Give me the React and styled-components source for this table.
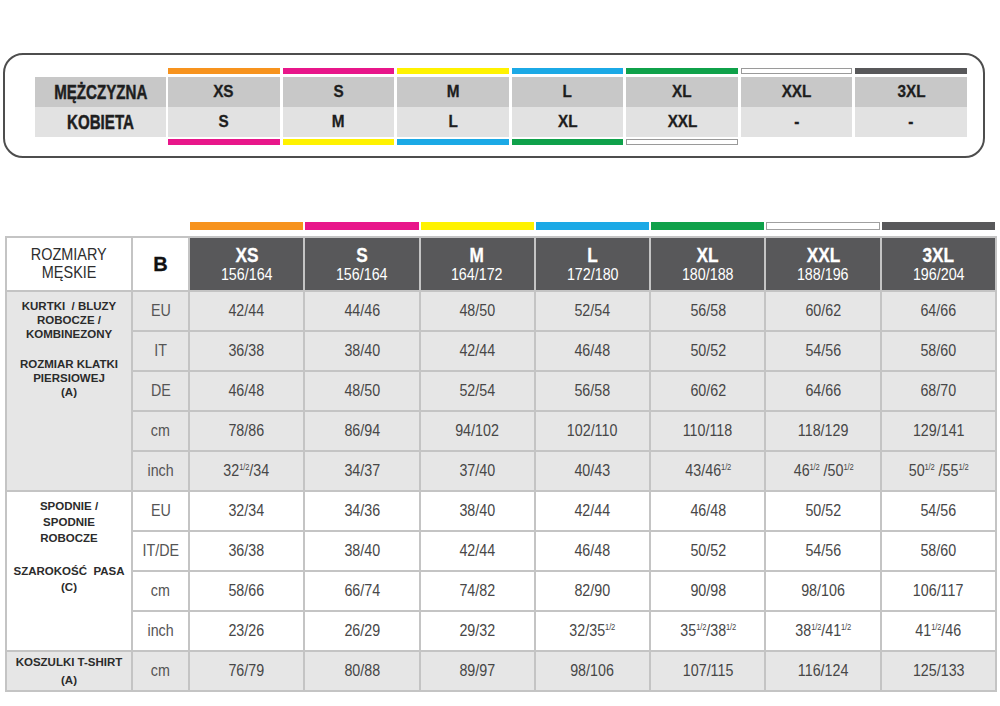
import React from "react";
import styled, { createGlobalStyle } from "styled-components";

const Global = createGlobalStyle`
  html, body { margin: 0; padding: 0; background: #fff; }
  body { font-family: "Liberation Sans", Arial, sans-serif; }
`;

const BAR = {
  orange: "#f7931e",
  magenta: "#e8168a",
  yellow: "#fff200",
  cyan: "#1ba9e6",
  green: "#0fa14a",
  white: "#ffffff",
  dark: "#58585a",
};

const Page = styled.div`
  width: 1000px;
  height: 706px;
  box-sizing: border-box;
  padding: 53px 0 0 3px;
  overflow: hidden;
`;

/* horizontally condensed text (stand-in for a condensed typeface) */
const Squeeze = styled.span`
  display: inline-block;
  white-space: nowrap;
  transform: scaleX(${(p) => p.$x || 0.82});
`;

/* ---------- top rounded box ---------- */
const TopBox = styled.div`
  width: 982px;
  height: 105px;
  box-sizing: border-box;
  border: 2px solid #4d4d4d;
  border-radius: 20px;
  padding: 13px 0 0 30px;
`;

const TopGrid = styled.div`
  width: 932px;
  display: grid;
  grid-template-columns: 130px repeat(7, 1fr);
  column-gap: 3px;
`;

const TopBar = styled.div`
  height: 6px;
  box-sizing: border-box;
  background: ${(p) => (p.$color ? BAR[p.$color] : "transparent")};
  border: ${(p) => (p.$color === "white" ? "1px solid #9a9a9a" : "none")};
  margin: ${(p) => (p.$bottom ? "2px 0 0" : "0 0 3px")};
`;

const TopLabel = styled.div`
  height: 30px;
  display: flex;
  align-items: center;
  justify-content: center;
  background: ${(p) => (p.$dark ? "#c8c8c8" : "#e2e2e2")};
  margin-right: -1px;
  font-weight: 700;
  font-size: 21px;
  color: #1e1e1e;
  -webkit-text-stroke: 0.5px #1e1e1e;
`;

const TopCell = styled.div`
  height: 30px;
  display: flex;
  align-items: center;
  justify-content: center;
  background: ${(p) => (p.$dark ? "#c8c8c8" : "#e2e2e2")};
  font-weight: 700;
  font-size: 17px;
  color: #1e1e1e;
  -webkit-text-stroke: 0.3px #1e1e1e;
`;

/* ---------- lower table ---------- */
const COLS = "124px 55px repeat(7, 1fr)";

const Lower = styled.div`
  margin: 64px 0 0 2px;
  width: 992px;
`;

const BarRow = styled.div`
  display: grid;
  grid-template-columns: ${COLS};
  column-gap: 2px;
  padding: 0 2px;
  margin-bottom: 6px;
`;

const Bar = styled.div`
  height: 8px;
  box-sizing: border-box;
  background: ${(p) => (p.$color ? BAR[p.$color] : "transparent")};
  border: ${(p) => (p.$color === "white" ? "1px solid #a0a0a0" : "none")};
`;

const Table = styled.div`
  display: grid;
  grid-template-columns: ${COLS};
  grid-template-rows: 52px;
  grid-auto-rows: 38px;
  gap: 2px;
  background: #c4c4c4;
  border: 2px solid #c4c4c4;
`;

const HeadTitle = styled.div`
  background: #fff;
  display: flex;
  flex-direction: column;
  align-items: center;
  justify-content: center;
  font-size: 17px;
  line-height: 18px;
  color: #2d2d2d;
`;

const HeadB = styled.div`
  background: #fff;
  display: flex;
  align-items: center;
  justify-content: center;
  font-weight: 700;
  font-size: 20px;
  color: #111;
  -webkit-text-stroke: 0.3px #111;
`;

const HeadSize = styled.div`
  background: #58585a;
  color: #fff;
  display: flex;
  flex-direction: column;
  align-items: center;
  justify-content: center;
  padding-top: 1px;
  box-sizing: border-box;
`;

const SizeName = styled.div`
  font-weight: 700;
  font-size: 21px;
  line-height: 20px;
  -webkit-text-stroke: 0.3px #fff;
`;

const SizeRange = styled.div`
  font-size: 17px;
  line-height: 19px;
`;

const GroupLabel = styled.div`
  grid-row: span ${(p) => p.$span};
  background: ${(p) => (p.$gray ? "#e6e6e6" : "#fff")};
  display: flex;
  flex-direction: column;
  align-items: center;
  justify-content: ${(p) => (p.$center ? "center" : "flex-start")};
  gap: ${(p) => p.$gap}px;
  padding-top: ${(p) => p.$pt}px;
  box-sizing: border-box;
  text-align: center;
  font-weight: 700;
  font-size: 11.5px;
  line-height: ${(p) => p.$lh}px;
  color: #2b2b2b;
`;

const LabelBlock = styled.div`
  white-space: pre;
`;

const Cell = styled.div`
  background: ${(p) => (p.$gray ? "#e6e6e6" : "#fff")};
  display: flex;
  align-items: center;
  justify-content: center;
  font-size: 17px;
  color: ${(p) => (p.$unit ? "#555" : "#474747")};
`;

const Half = styled.sup`
  font-size: 9px;
  line-height: 0;
  vertical-align: 6px;
  letter-spacing: -0.2px;
`;

const SIZES = [
  ["XS", "156/164"],
  ["S", "156/164"],
  ["M", "164/172"],
  ["L", "172/180"],
  ["XL", "180/188"],
  ["XXL", "188/196"],
  ["3XL", "196/204"],
];

const TOP_BARS = ["orange", "magenta", "yellow", "cyan", "green", "white", "dark"];
const BOTTOM_BARS = ["magenta", "yellow", "cyan", "green", "white", null, null];
const MEN = ["XS", "S", "M", "L", "XL", "XXL", "3XL"];
const WOMEN = ["S", "M", "L", "XL", "XXL", "-", "-"];

const GROUPS = [
  {
    gray: true,
    pt: 7,
    lh: 14,
    gap: 16,
    blocks: [
      ["KURTKI  / BLUZY", "ROBOCZE /", "KOMBINEZONY"],
      ["ROZMIAR KLATKI", "PIERSIOWEJ", "(A)"],
    ],
    rows: [
      ["EU", "42/44", "44/46", "48/50", "52/54", "56/58", "60/62", "64/66"],
      ["IT", "36/38", "38/40", "42/44", "46/48", "50/52", "54/56", "58/60"],
      ["DE", "46/48", "48/50", "52/54", "56/58", "60/62", "64/66", "68/70"],
      ["cm", "78/86", "86/94", "94/102", "102/110", "110/118", "118/129", "129/141"],
      ["inch", "32½/34", "34/37", "37/40", "40/43", "43/46½", "46½ /50½", "50½ /55½"],
    ],
  },
  {
    gray: false,
    pt: 6,
    lh: 16,
    gap: 17,
    blocks: [
      ["SPODNIE /", "SPODNIE", "ROBOCZE"],
      ["SZAROKOŚĆ  PASA", "(C)"],
    ],
    rows: [
      ["EU", "32/34", "34/36", "38/40", "42/44", "46/48", "50/52", "54/56"],
      ["IT/DE", "36/38", "38/40", "42/44", "46/48", "50/52", "54/56", "58/60"],
      ["cm", "58/66", "66/74", "74/82", "82/90", "90/98", "98/106", "106/117"],
      ["inch", "23/26", "26/29", "29/32", "32/35½", "35½/38½", "38½/41½", "41½/46"],
    ],
  },
  {
    gray: true,
    pt: 0,
    lh: 18,
    gap: 0,
    center: true,
    blocks: [["KOSZULKI T-SHIRT", "(A)"]],
    rows: [["cm", "76/79", "80/88", "89/97", "98/106", "107/115", "116/124", "125/133"]],
  },
];

function Value({ text }) {
  const parts = text.split("½");
  return (
    <Squeeze $x={0.84}>
      {parts.map((p, i) => (
        <React.Fragment key={i}>
          {p}
          {i < parts.length - 1 && <Half>1/2</Half>}
        </React.Fragment>
      ))}
    </Squeeze>
  );
}

export default function App() {
  return (
    <>
      <Global />
      <Page>
        <TopBox>
          <TopGrid>
            <div />
            {TOP_BARS.map((c, i) => (
              <TopBar key={i} $color={c} />
            ))}
            <TopLabel $dark>
              <Squeeze $x={0.72}>MĘŻCZYZNA</Squeeze>
            </TopLabel>
            {MEN.map((s, i) => (
              <TopCell key={i} $dark>
                <Squeeze $x={0.9}>{s}</Squeeze>
              </TopCell>
            ))}
            <TopLabel>
              <Squeeze $x={0.72}>KOBIETA</Squeeze>
            </TopLabel>
            {WOMEN.map((s, i) => (
              <TopCell key={i}>
                <Squeeze $x={0.9}>{s}</Squeeze>
              </TopCell>
            ))}
            <div />
            {BOTTOM_BARS.map((c, i) => (
              <TopBar key={i} $color={c} $bottom />
            ))}
          </TopGrid>
        </TopBox>

        <Lower>
          <BarRow>
            <div />
            <div />
            {TOP_BARS.map((c, i) => (
              <Bar key={i} $color={c} />
            ))}
          </BarRow>
          <Table>
            <HeadTitle>
              <Squeeze $x={0.85}>ROZMIARY</Squeeze>
              <Squeeze $x={0.85}>MĘSKIE</Squeeze>
            </HeadTitle>
            <HeadB>B</HeadB>
            {SIZES.map(([n, r]) => (
              <HeadSize key={n}>
                <SizeName>
                  <Squeeze $x={0.82}>{n}</Squeeze>
                </SizeName>
                <SizeRange>
                  <Squeeze $x={0.84}>{r}</Squeeze>
                </SizeRange>
              </HeadSize>
            ))}
            {GROUPS.map((g, gi) => (
              <React.Fragment key={gi}>
                <GroupLabel
                  $span={g.rows.length}
                  $gray={g.gray}
                  $pt={g.pt}
                  $lh={g.lh}
                  $gap={g.gap}
                  $center={g.center}
                >
                  {g.blocks.map((b, bi) => (
                    <LabelBlock key={bi}>
                      {b.map((line, li) => (
                        <div key={li}>{line}</div>
                      ))}
                    </LabelBlock>
                  ))}
                </GroupLabel>
                {g.rows.map((row, ri) =>
                  row.map((v, ci) => (
                    <Cell key={`${ri}-${ci}`} $gray={g.gray} $unit={ci === 0}>
                      <Value text={v} />
                    </Cell>
                  ))
                )}
              </React.Fragment>
            ))}
          </Table>
        </Lower>
      </Page>
    </>
  );
}
